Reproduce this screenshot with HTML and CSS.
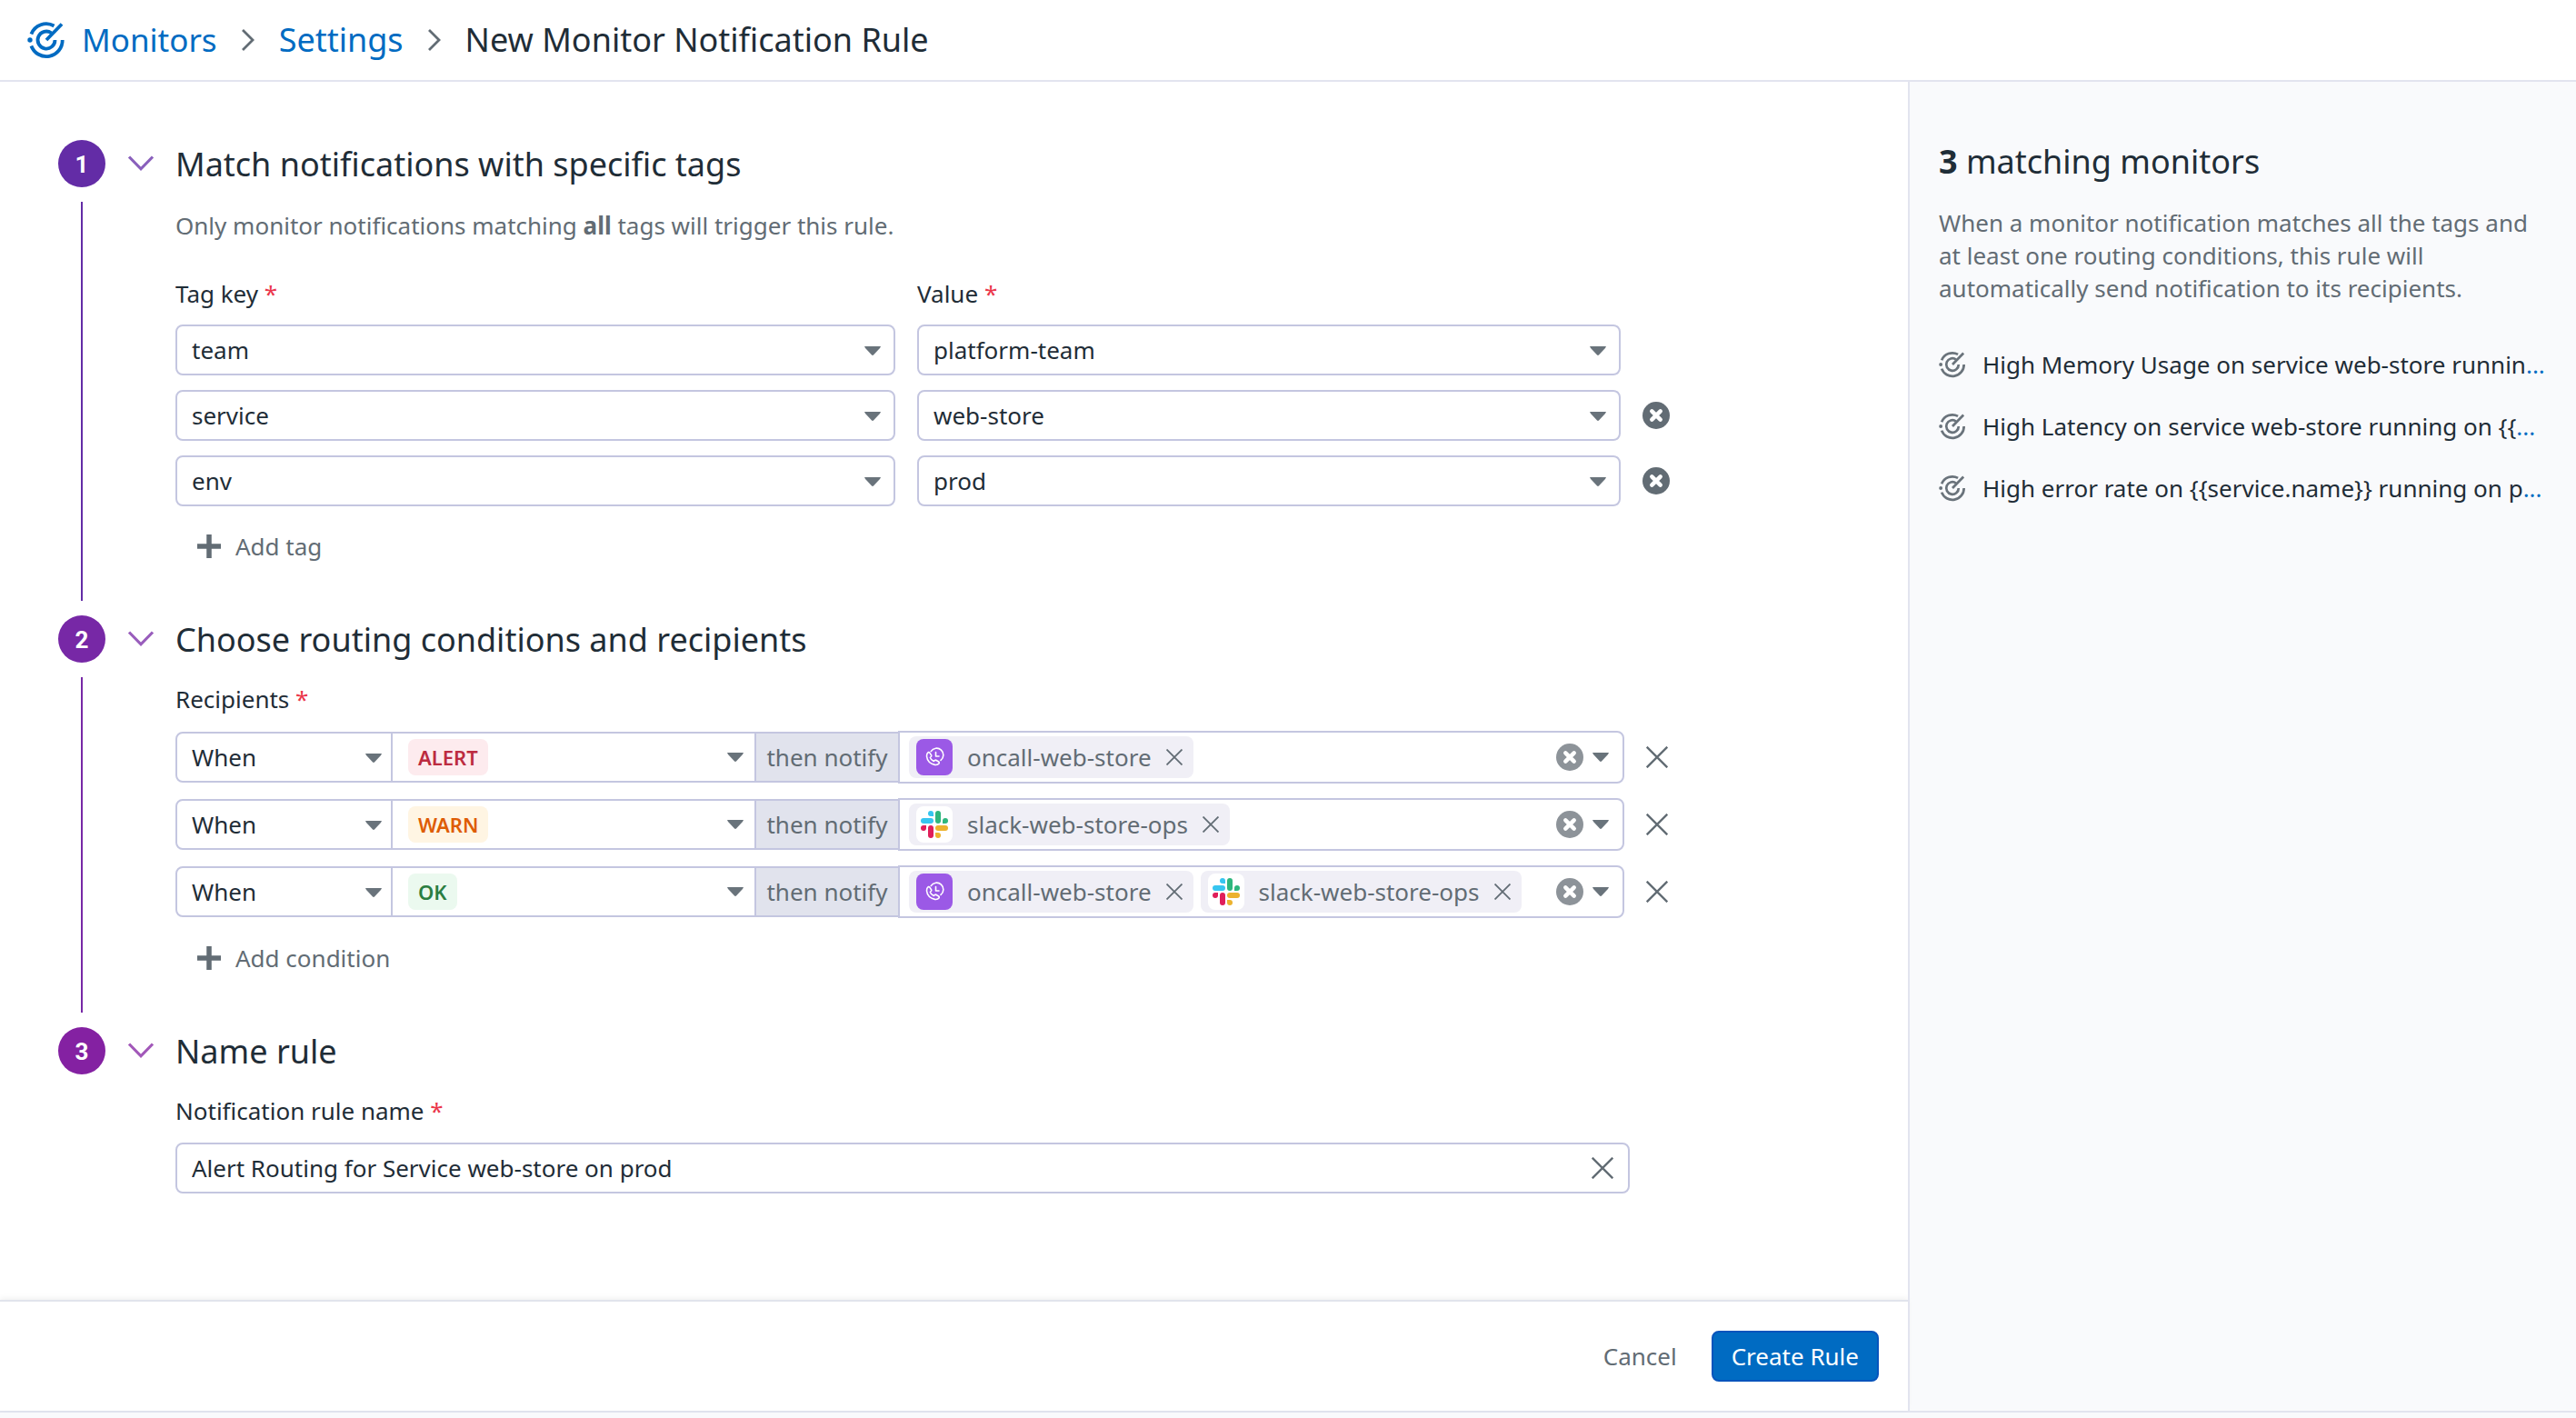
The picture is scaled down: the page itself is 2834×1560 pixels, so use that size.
FILE: index.html
```html
<!DOCTYPE html>
<html lang="en">
<head>
<meta charset="utf-8">
<title>New Monitor Notification Rule</title>
<meta name="viewport" content="width=device-width, initial-scale=1">
<link rel="stylesheet" href="styles.css">
</head>
<body>
<svg class="sprite" aria-hidden="true">
  <symbol id="i-monitor" viewBox="0 0 42 42">
    <g fill="none" stroke="currentColor" stroke-width="3.800">
      <path d="M4.400 14.500 A17.700 17.700 0 0 1 29.500 5.500"/>
      <path d="M4.400 27.500 A17.700 17.700 0 0 0 38.700 21"/>
      <path d="M26.500 13.300 A9.500 9.500 0 1 0 30.500 21"/>
      <path d="M21 21 L38 3.500"/>
    </g>
    <circle cx="3" cy="21" r="2.700" fill="currentColor"/>
  </symbol>
  <symbol id="i-clear" viewBox="0 0 30 30">
    <circle cx="15" cy="15" r="15" fill="currentColor"/>
    <path d="M10.300 10.300 L19.700 19.700 M19.700 10.300 L10.300 19.700" stroke="#fff" stroke-width="4.500" stroke-linecap="round"/>
  </symbol>
  <symbol id="i-close" viewBox="0 0 24 24">
    <path d="M0.700 0.700 L23.300 23.300 M23.300 0.700 L0.700 23.300" stroke="currentColor" stroke-width="2.400"/>
  </symbol>
  <symbol id="i-plus" viewBox="0 0 26 26">
    <path d="M13 0 V26 M0 13 H26" stroke="currentColor" stroke-width="5.500"/>
  </symbol>
  <symbol id="i-down" viewBox="0 0 30 18">
    <path d="M2 1.500 L15 14.800 L28 1.500" fill="none" stroke="currentColor" stroke-width="3.200"/>
  </symbol>
  <symbol id="i-right" viewBox="0 0 14 24">
    <path d="M1 1 L12 12 L1 23" fill="none" stroke="currentColor" stroke-width="2.800"/>
  </symbol>
  <symbol id="i-caret" viewBox="0 0 18 10">
    <path d="M0 0 H18 L17 2 L10 9.500 Q9 10.400 8 9.500 L1 2 Z" fill="currentColor"/>
  </symbol>
  <symbol id="i-oncall" viewBox="0 0 40 40">
    <rect width="40" height="40" rx="8" fill="#9b59e6"/>
    <g fill="none" stroke="#fff" stroke-width="1.600" stroke-linejoin="round" stroke-linecap="round">
      <path d="M16.200 13.600 A7.400 7.400 0 1 1 27 23.400"/>
      <path d="M21.500 14.500 V19 H25"/>
      <path d="M13.200 14.600 Q14.300 14.400 15 15.400 L16.800 18.200 Q17 19.300 15.300 20.400 Q16 23 19.300 24.500 Q20.600 22.900 21.700 23.200 L24.700 25 Q25.600 25.700 25.200 26.800 Q23.500 28.900 20.500 28.400 Q12.300 26.500 11.500 19 Q11.300 16 13.200 14.600 Z"/>
    </g>
  </symbol>
  <symbol id="i-slack" viewBox="0 0 40 40">
    <rect width="40" height="40" rx="8" fill="#fff"/>
    <g fill="#36c5f0"><rect x="5" y="13" width="14" height="6" rx="3"/><path d="M16 5 a3 3 0 0 1 3 3 v3 h-3 a3 3 0 0 1 0 -6z"/></g>
    <g fill="#2eb67d"><rect x="21" y="5" width="6" height="14" rx="3"/><path d="M35 16 a3 3 0 0 1 -3 3 h-3 v-3 a3 3 0 0 1 6 0z"/></g>
    <g fill="#ecb22e"><rect x="21" y="21" width="14" height="6" rx="3"/><path d="M24 35 a3 3 0 0 1 -3 -3 v-3 h3 a3 3 0 0 1 0 6z"/></g>
    <g fill="#e01e5a"><rect x="13" y="21" width="6" height="14" rx="3"/><path d="M5 24 a3 3 0 0 1 3 -3 h3 v3 a3 3 0 0 1 -6 0z"/></g>
  </symbol>
</svg>

<header class="topbar">
  <nav class="crumbs" aria-label="Breadcrumb">
    <a class="crumb-home" href="#"><svg class="icon-logo"><use href="#i-monitor"/></svg>Monitors</a>
    <svg class="icon-sep"><use href="#i-right"/></svg>
    <a href="#">Settings</a>
    <svg class="icon-sep"><use href="#i-right"/></svg>
    <span>New Monitor Notification Rule</span>
  </nav>
</header>

<div class="page">
  <main class="main">
    <form class="steps">
      <section class="step step-one">
        <div class="rail"><span class="num">1</span><span class="line"></span></div>
        <button class="toggle" type="button" aria-label="Collapse step 1"><svg class="icon-down"><use href="#i-down"/></svg></button>
        <div class="body">
          <h2>Match notifications with specific tags</h2>
          <p class="hint">Only monitor notifications matching <b>all</b> tags will trigger this rule.</p>
          <div class="tags">
            <label for="key1">Tag key <i>*</i></label>
            <label for="val1">Value <i>*</i></label>
            <span></span>
            <div class="select"><select id="key1"><option>team</option></select><svg class="icon-caret"><use href="#i-caret"/></svg></div>
            <div class="select"><select id="val1"><option>platform-team</option></select><svg class="icon-caret"><use href="#i-caret"/></svg></div>
            <span></span>
            <div class="select"><select aria-label="Tag key 2"><option>service</option></select><svg class="icon-caret"><use href="#i-caret"/></svg></div>
            <div class="select"><select aria-label="Value 2"><option>web-store</option></select><svg class="icon-caret"><use href="#i-caret"/></svg></div>
            <button class="plain" type="button" aria-label="Remove tag"><svg class="icon-clear"><use href="#i-clear"/></svg></button>
            <div class="select"><select aria-label="Tag key 3"><option>env</option></select><svg class="icon-caret"><use href="#i-caret"/></svg></div>
            <div class="select"><select aria-label="Value 3"><option>prod</option></select><svg class="icon-caret"><use href="#i-caret"/></svg></div>
            <button class="plain" type="button" aria-label="Remove tag"><svg class="icon-clear"><use href="#i-clear"/></svg></button>
          </div>
          <button class="add" type="button"><svg class="icon-plus"><use href="#i-plus"/></svg>Add tag</button>
        </div>
      </section>

      <section class="step step-two">
        <div class="rail"><span class="num">2</span><span class="line"></span></div>
        <button class="toggle" type="button" aria-label="Collapse step 2"><svg class="icon-down"><use href="#i-down"/></svg></button>
        <div class="body">
          <h2>Choose routing conditions and recipients</h2>
          <label class="field-label" for="when1">Recipients <i>*</i></label>
          <div class="rules">
            <div class="rule">
              <div class="select when"><select id="when1"><option>When</option></select><svg class="icon-caret"><use href="#i-caret"/></svg></div>
              <button class="state" type="button"><span class="badge alert">ALERT</span><svg class="icon-caret"><use href="#i-caret"/></svg></button>
              <span class="then">then notify</span>
              <div class="notify">
                <span class="chip"><svg class="icon-app"><use href="#i-oncall"/></svg>oncall-web-store<button class="plain" type="button" aria-label="Remove oncall-web-store"><svg class="icon-x"><use href="#i-close"/></svg></button></span>
                <button class="plain clear" type="button" aria-label="Clear recipients"><svg class="icon-clear"><use href="#i-clear"/></svg></button>
                <svg class="icon-caret"><use href="#i-caret"/></svg>
              </div>
              <button class="plain remove" type="button" aria-label="Remove condition"><svg class="icon-close"><use href="#i-close"/></svg></button>
            </div>
            <div class="rule">
              <div class="select when"><select aria-label="Condition 2"><option>When</option></select><svg class="icon-caret"><use href="#i-caret"/></svg></div>
              <button class="state" type="button"><span class="badge warn">WARN</span><svg class="icon-caret"><use href="#i-caret"/></svg></button>
              <span class="then">then notify</span>
              <div class="notify">
                <span class="chip"><svg class="icon-app"><use href="#i-slack"/></svg>slack-web-store-ops<button class="plain" type="button" aria-label="Remove slack-web-store-ops"><svg class="icon-x"><use href="#i-close"/></svg></button></span>
                <button class="plain clear" type="button" aria-label="Clear recipients"><svg class="icon-clear"><use href="#i-clear"/></svg></button>
                <svg class="icon-caret"><use href="#i-caret"/></svg>
              </div>
              <button class="plain remove" type="button" aria-label="Remove condition"><svg class="icon-close"><use href="#i-close"/></svg></button>
            </div>
            <div class="rule">
              <div class="select when"><select aria-label="Condition 3"><option>When</option></select><svg class="icon-caret"><use href="#i-caret"/></svg></div>
              <button class="state" type="button"><span class="badge ok">OK</span><svg class="icon-caret"><use href="#i-caret"/></svg></button>
              <span class="then">then notify</span>
              <div class="notify">
                <span class="chip"><svg class="icon-app"><use href="#i-oncall"/></svg>oncall-web-store<button class="plain" type="button" aria-label="Remove oncall-web-store"><svg class="icon-x"><use href="#i-close"/></svg></button></span>
                <span class="chip"><svg class="icon-app"><use href="#i-slack"/></svg>slack-web-store-ops<button class="plain" type="button" aria-label="Remove slack-web-store-ops"><svg class="icon-x"><use href="#i-close"/></svg></button></span>
                <button class="plain clear" type="button" aria-label="Clear recipients"><svg class="icon-clear"><use href="#i-clear"/></svg></button>
                <svg class="icon-caret"><use href="#i-caret"/></svg>
              </div>
              <button class="plain remove" type="button" aria-label="Remove condition"><svg class="icon-close"><use href="#i-close"/></svg></button>
            </div>
          </div>
          <button class="add" type="button"><svg class="icon-plus"><use href="#i-plus"/></svg>Add condition</button>
        </div>
      </section>

      <section class="step step-three">
        <div class="rail"><span class="num">3</span></div>
        <button class="toggle" type="button" aria-label="Collapse step 3"><svg class="icon-down"><use href="#i-down"/></svg></button>
        <div class="body">
          <h2>Name rule</h2>
          <label class="field-label" for="name">Notification rule name <i>*</i></label>
          <div class="name">
            <input id="name" type="text" value="Alert Routing for Service web-store on prod">
            <button class="plain" type="button" aria-label="Clear name"><svg class="icon-close"><use href="#i-close"/></svg></button>
          </div>
        </div>
      </section>
    </form>
    <footer class="actions">
      <button class="cancel" type="button">Cancel</button>
      <button class="create" type="button">Create Rule</button>
    </footer>
  </main>

  <aside class="side">
    <h2><b>3</b> matching monitors</h2>
    <p>When a monitor notification matches all the tags and at least one routing conditions, this rule will automatically send notification to its recipients.</p>
    <ul>
      <li><svg class="icon-item"><use href="#i-monitor"/></svg><a href="#"><span>High Memory Usage on service web-store runnin</span>...</a></li>
      <li><svg class="icon-item"><use href="#i-monitor"/></svg><a href="#"><span>High Latency on service web-store running on {{</span>...</a></li>
      <li><svg class="icon-item"><use href="#i-monitor"/></svg><a href="#"><span>High error rate on {{service.name}} running on p</span>...</a></li>
    </ul>
  </aside>
</div>
</body>
</html>
```
FILE: styles.css
```css
* { box-sizing: border-box; }

body {
  margin: 0;
  min-height: 100vh;
  display: flex;
  flex-direction: column;
  background: #f9fafc;
  color: #1f2d37;
  font: 26px/36px "Noto Sans", sans-serif;
}

h2, p, ul { margin: 0; padding: 0; font-weight: 400; }
h2 { font-size: 36px; line-height: 54px; }
a { color: #006bc2; text-decoration: none; }
button, select, input { font: inherit; color: inherit; margin: 0; }
svg { display: block; flex: none; }
label { display: block; }
label i { color: #eb364b; font-style: normal; }

.sprite { position: absolute; width: 0; height: 0; }
.icon-logo { width: 42px; height: 42px; }
.icon-item { width: 30px; height: 30px; color: #6a737b; }
.icon-sep { width: 14px; height: 24px; color: #626c74; }
.icon-down { width: 30px; height: 18px; }
.icon-caret { width: 18px; height: 10px; color: #69737b; }
.icon-clear { width: 30px; height: 30px; }
.icon-close { width: 24px; height: 24px; }
.icon-x { width: 18px; height: 18px; }
.icon-plus { width: 26px; height: 26px; }
.icon-app { width: 40px; height: 40px; }

.plain {
  display: flex;
  padding: 0;
  border: 0;
  background: none;
  color: #626c74;
}

.topbar {
  padding: 18px 30px;
  border-bottom: 2px solid #e2e4ef;
  background: #fff;
  font-size: 36px;
  line-height: 52px;
}
.crumbs { display: flex; align-items: center; gap: 27px; }
.crumb-home { display: flex; align-items: center; gap: 18px; font-size: 35px; }

.page {
  flex: 1;
  display: flex;
  margin-bottom: 6px;
  border-bottom: 2px solid #e2e4ef;
}
.main {
  flex: 1;
  display: flex;
  flex-direction: column;
  background: #fff;
}
.steps { flex: 1; padding: 64px 64px 48px; }

.step { display: flex; }
.step-one { --tone: #632ca6; }
.step-two { --tone: #7728a6; }
.step-three { --tone: #8421a2; }
.rail {
  width: 52px;
  display: flex;
  flex-direction: column;
  align-items: center;
  gap: 16px;
}
.num {
  width: 52px;
  height: 52px;
  border-radius: 50%;
  background: var(--tone);
  color: #fff;
  font-family: Roboto, sans-serif;
  font-weight: 700;
  line-height: 54px;
  text-align: center;
}
.line { flex: 1; width: 2px; margin-bottom: 16px; background: var(--tone); }
.toggle {
  width: 77px;
  height: 52px;
  display: grid;
  place-items: center;
  padding: 0;
  border: 0;
  background: none;
  color: var(--tone);
}
.toggle svg { opacity: .75; }
.body { flex: 1; max-width: 1644px; }

.hint { margin-top: 22px; color: #626c74; }
.tags {
  display: grid;
  grid-template-columns: 792fr 774fr 30px;
  align-items: center;
  gap: 16px 24px;
  margin-top: 39px;
}

.select { position: relative; }
.select select {
  display: block;
  width: 100%;
  height: 56px;
  padding: 0 40px 0 16px;
  border: 2px solid #c4c6e0;
  border-radius: 8px;
  background: #fff;
  appearance: none;
}
.select .icon-caret { position: absolute; right: 16px; top: 24px; pointer-events: none; }

.add {
  display: flex;
  align-items: center;
  gap: 16px;
  margin: 16px 0 48px;
  padding: 8px 24px;
  border: 0;
  background: none;
  color: #626c74;
  line-height: 40px;
}

.field-label { margin-top: 20px; }
.rules { display: grid; gap: 16px; margin-top: 17px; }
.rule { display: flex; align-items: center; }
.when { width: 239px; }
.when select { border-radius: 8px 0 0 8px; }
.when .icon-caret { right: 12px; }
.state {
  width: 398px;
  height: 56px;
  display: flex;
  align-items: center;
  justify-content: space-between;
  padding: 0 12px 0 17px;
  border: 2px solid #c4c6e0;
  border-width: 2px 0;
  background: #fff;
}
.badge {
  padding: 0 11px;
  border-radius: 8px;
  font-size: 22px;
  font-weight: 600;
  line-height: 40px;
}
.alert { background: #fdebee; color: #bc2b40; }
.warn { background: #fff5e3; color: #de5c05; }
.ok { background: #ebf9ef; color: #2a7e41; }
.then {
  width: 158px;
  height: 56px;
  border: 2px solid #c4c6e0;
  border-right: 0;
  background: #e1e3ed;
  color: #626c74;
  line-height: 52px;
  text-align: center;
}
.notify {
  flex: 1;
  height: 58px;
  display: flex;
  align-items: center;
  gap: 8px;
  padding: 0 15px 0 10px;
  border: 2px solid #c4c6e0;
  border-radius: 0 8px 8px 0;
}
.chip {
  height: 46px;
  display: flex;
  align-items: center;
  gap: 16px;
  padding: 0 12px 0 8px;
  border-radius: 8px;
  background: #f0eff6;
  color: #626c74;
}
.clear { margin: 0 2px 0 auto; color: #8d9399; }
.remove { padding: 0 2px 0 24px; }

.name {
  max-width: 1600px;
  height: 56px;
  display: flex;
  align-items: center;
  margin-top: 17px;
  padding-right: 16px;
  border: 2px solid #c4c6e0;
  border-radius: 8px;
}
.name input {
  flex: 1;
  padding: 0 16px;
  border: 0;
  background: none;
  outline: 0;
}

.actions {
  display: flex;
  justify-content: flex-end;
  align-items: center;
  gap: 38px;
  padding: 32px;
  border-top: 2px solid #e1e4ec;
  background: #fff;
  box-shadow: 0 -2px 6px rgba(0, 0, 0, .06);
}
.actions button { height: 56px; border-radius: 8px; }
.cancel { padding: 0; border: 0; background: none; color: #626c74; }
.create {
  padding: 0 20px;
  border: 2px solid #0654bc;
  background: #006bc2;
  color: #fff;
}

.side {
  width: 735px;
  padding: 61px 32px;
  border-left: 2px solid #e2e4ef;
}
.side p { margin-top: 22px; color: #626c74; }
.side ul {
  display: grid;
  gap: 32px;
  margin-top: 48px;
  list-style: none;
}
.side li { display: flex; align-items: center; gap: 18px; white-space: nowrap; }
.side span { color: #1f2d37; }
```
